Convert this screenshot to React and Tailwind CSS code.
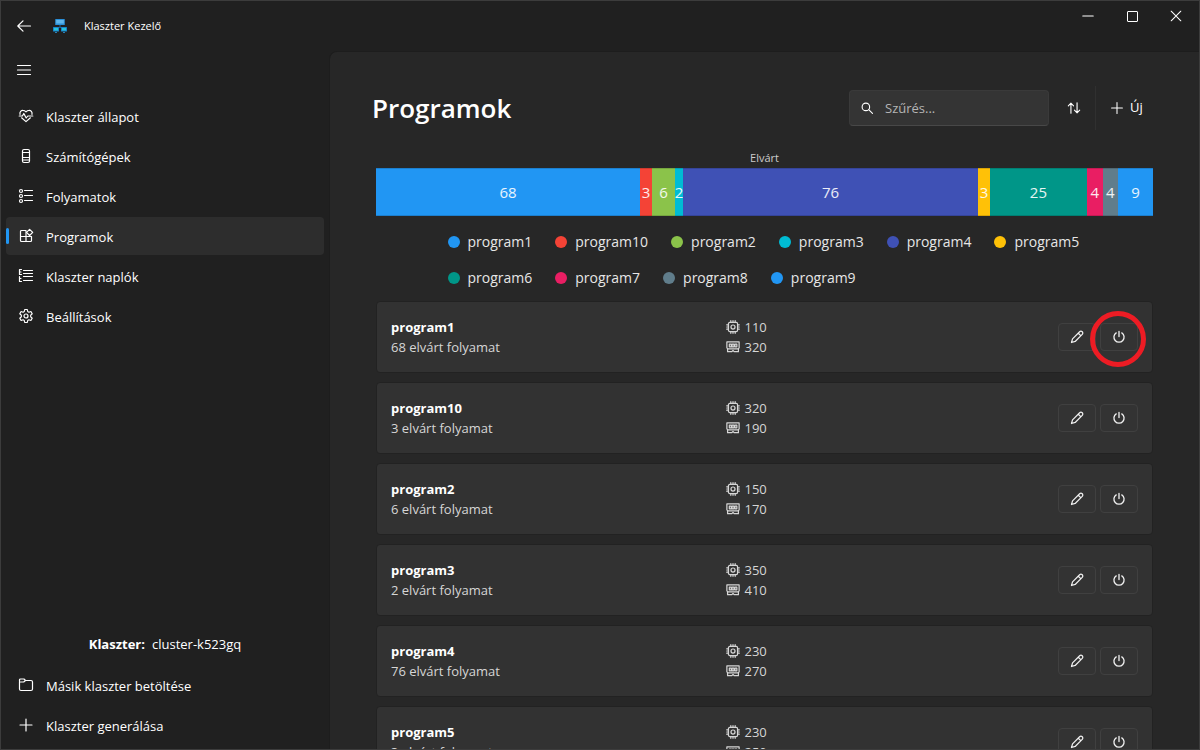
import { useState } from "react";

const programs = [
  { name: "program1", count: 68, cpu: 110, mem: 320, color: "bg-[#2196f3]" },
  { name: "program10", count: 3, cpu: 320, mem: 190, color: "bg-[#f44336]" },
  { name: "program2", count: 6, cpu: 150, mem: 170, color: "bg-[#8bc34a]" },
  { name: "program3", count: 2, cpu: 350, mem: 410, color: "bg-[#00bcd4]" },
  { name: "program4", count: 76, cpu: 230, mem: 270, color: "bg-[#3f51b5]" },
  { name: "program5", count: 3, cpu: 230, mem: 250, color: "bg-[#ffc107]" },
  { name: "program6", count: 25, color: "bg-[#009688]" },
  { name: "program7", count: 4, color: "bg-[#e91e63]" },
  { name: "program8", count: 4, color: "bg-[#607d8b]" },
  { name: "program9", count: 9, color: "bg-[#2196f3]" },
];

function Icon({ children, className = "size-4", width = 1.2 }) {
  return (
    <svg
      viewBox="0 0 16 16"
      className={`shrink-0 ${className}`}
      fill="none"
      stroke="currentColor"
      strokeWidth={width}
      strokeLinecap="round"
      strokeLinejoin="round"
      aria-hidden="true"
    >
      {children}
    </svg>
  );
}

const HeartPulse = () => (
  <Icon>
    <path d="M2 6.300C1.500 3.800 3.200 2.300 5 2.400c1.300 0 2.200.6 3 1.500.8-.9 1.700-1.500 3-1.500 1.800-.1 3.500 1.400 3 3.900M3.600 9.800 8 13.600l4.400-3.800" />
    <path d="M1.200 8h3.200l1.400-2.500 2.400 4.500L9.800 8h5" />
  </Icon>
);

const Tower = () => (
  <Icon>
    <rect x="4.500" y="1.500" width="7" height="13" rx="1.500" />
    <path d="M5 4.500h6M5 9.500h6M5 12h6" />
  </Icon>
);

const AppsList = () => (
  <Icon>
    <circle cx="3" cy="3" r="1.500" />
    <circle cx="3" cy="8" r="1.500" />
    <circle cx="3" cy="13" r="1.500" />
    <path d="M6.500 2.500H14.500M6.500 7.500H14.500M6.500 12.500H14.500" />
  </Icon>
);

const AppsAdd = () => (
  <Icon>
    <path d="M8 2.500H3.500a1 1 0 0 0-1 1v9a1 1 0 0 0 1 1h9a1 1 0 0 0 1-1V8.500H2.500M8 2.500v11" />
    <path d="m11.600 1.300 3.100 3.100-3.100 3.100-3.100-3.100z" />
  </Icon>
);

const LogList = () => (
  <Icon>
    <path d="M3.500 1.500h-2v5h2M1.500 8.500v5h2M1.500 10.500h1.500M1.500 4h1.500M5.500 2.500h9M5.500 5.500h9M5.500 8.500h9M5.500 12.500h9" />
  </Icon>
);

const Gear = () => (
  <Icon>
    <path d="M6.700 1.500h2.600l.4 2 1.200.7 2-.7 1.300 2.200-1.500 1.400v1.800l1.500 1.400-1.300 2.200-2-.7-1.200.7-.4 2H6.700l-.4-2-1.200-.7-2 .7-1.300-2.200 1.500-1.400V7.100L1.800 5.700l1.300-2.200 2 .7 1.200-.7z" />
    <circle cx="8" cy="8" r="2" />
  </Icon>
);

const Folder = () => (
  <Icon>
    <path d="M1.500 4V3a1 1 0 0 1 1-1H6l1.500 1.500h5.500a1.500 1.500 0 0 1 1.500 1.500v7a1.500 1.500 0 0 1-1.500 1.500H3A1.500 1.500 0 0 1 1.500 12V4.500M1.500 5h4.200l1.800-1.500" />
  </Icon>
);

const Plus = () => (
  <Icon>
    <path d="M8 2v12M2 8h12" />
  </Icon>
);

const Chip = () => (
  <Icon className="size-3.5" width={1.4}>
    <rect x="2.800" y="2.800" width="10.400" height="10.400" rx="1.500" />
    <circle cx="8" cy="8" r="2.300" />
    <path d="M5.500.8v2M8 .8v2M10.500.8v2M5.500 13.200v2M8 13.200v2M10.500 13.200v2M.8 5.500h2M.8 8h2M.8 10.500h2M13.200 5.500h2M13.200 8h2M13.200 10.500h2" />
  </Icon>
);

const Memory = () => (
  <Icon className="size-3.5" width={1.4}>
    <path d="M1 2.200h14v6.800l-.8.800v3.500H9.300L8 12l-1.300 1.300H1.800V9.800L1 9z" />
    <path d="M3.800 4.800h2.200v3H3.800zM6.900 4.800h2.200v3H6.900zM10.200 4.800h2.200v3h-2.200zM1.800 10.200h12.400" />
  </Icon>
);

const Pencil = () => (
  <Icon className="size-3.5" width={1.4}>
    <path d="M11 2a2 2 0 0 1 3 3L5.900 13.100l-4.200 1.200 1.200-4.200zM9.500 3.700l2.800 2.800" />
  </Icon>
);

const Power = () => (
  <Icon className="size-3.5" width={1.5}>
    <path d="M8 1.500v6M4.800 3.300a5.800 5.800 0 1 0 6.400 0" />
  </Icon>
);

const AppLogo = () => (
  <svg viewBox="0 0 16 16" className="size-4" aria-hidden="true">
    <path d="M8 7v3M4 9.500h8" stroke="#1b5e8c" strokeWidth="1.200" />
    <rect x="3.200" y="1" width="9.600" height="6" rx=".6" fill="#2a8fd8" />
    <rect x="4.200" y="2" width="7.600" height="3.500" fill="#5fb6ea" />
    <rect x="1" y="9" width="6" height="4.500" rx=".5" fill="#1683cc" />
    <rect x="9" y="9" width="6" height="4.500" rx=".5" fill="#1683cc" />
    <path d="M2 10h4v2.500H2zM10 10h4v2.500h-4z" fill="#28c4d8" />
    <path d="M3 14.500h2M11 14.500h2" stroke="#2a7fb8" />
  </svg>
);

const menu = [
  { label: "Klaszter állapot", icon: HeartPulse },
  { label: "Számítógépek", icon: Tower },
  { label: "Folyamatok", icon: AppsList },
  { label: "Programok", icon: AppsAdd },
  { label: "Klaszter naplók", icon: LogList },
  { label: "Beállítások", icon: Gear },
];

function NavItem({ label, icon: Glyph, active, onClick }) {
  return (
    <button
      type="button"
      onClick={onClick}
      aria-current={active ? "page" : undefined}
      className={`relative flex h-[38px] w-full items-center gap-3 rounded pl-3 text-left ${
        active ? "bg-[#2d2d2d]" : "hover:bg-[#292929]"
      }`}
    >
      {active && <span className="absolute top-[11px] left-0 h-4 w-[3px] rounded-full bg-[#2196f3]" />}
      <Glyph />
      <span className="pt-[3px]">{label}</span>
    </button>
  );
}

function TitleBar() {
  const control = "flex h-[30px] w-11 items-center justify-center";
  return (
    <header className="flex h-[50px] shrink-0 items-start justify-between">
      <div className="flex h-full items-center pl-[15px]">
        <button type="button" aria-label="Vissza">
          <Icon>
            <path d="M14.500 8H2M7 2.800 1.800 8 7 13.200" />
          </Icon>
        </button>
        <div className="ml-5 flex items-center gap-4">
          <AppLogo />
          <h2 className="text-[11px]">Klaszter Kezelő</h2>
        </div>
      </div>
      <div className="flex pr-px">
        <button type="button" className={control} aria-label="Kis méret">
          <Icon className="size-3.5" width={1.2}>
            <path d="M2 8h12" />
          </Icon>
        </button>
        <button type="button" className={control} aria-label="Teljes méret">
          <span className="size-[11px] rounded-[1px] border border-white" />
        </button>
        <button type="button" className={control} aria-label="Bezárás">
          <Icon className="size-3.5" width={1.2}>
            <path d="m2.500 2.500 11 11M13.500 2.500l-11 11" />
          </Icon>
        </button>
      </div>
    </header>
  );
}

function Sidebar() {
  const [active, setActive] = useState("Programok");
  return (
    <aside className="flex w-[328px] shrink-0 flex-col pr-[5px] pb-[5px] pl-[5px]">
      <button type="button" aria-label="Menü" className="flex h-[38px] w-9 items-center justify-center">
        <Icon>
          <path d="M1.500 3.500h13M1.500 8h13M1.500 12.500h13" />
        </Icon>
      </button>
      <nav className="mt-2 flex flex-col gap-0.5">
        {menu.map((m) => (
          <NavItem key={m.label} {...m} active={m.label === active} onClick={() => setActive(m.label)} />
        ))}
      </nav>
      <div className="mt-auto flex flex-col gap-0.5">
        <p className="mb-2.5 text-center leading-5">
          <strong className="mr-[7px] font-bold">Klaszter:</strong>
          cluster-k523gq
        </p>
        <NavItem label="Másik klaszter betöltése" icon={Folder} />
        <NavItem label="Klaszter generálása" icon={Plus} />
      </div>
    </aside>
  );
}

function Toolbar() {
  return (
    <div className="flex h-11 items-center pl-px">
      <h1 className="flex-1 text-[26px] font-semibold">Programok</h1>
      <label className="flex h-9 w-[200px] items-center gap-3 rounded border border-[#3a3a3a] border-b-[#484848] bg-[#343434] px-[11px]">
        <Icon className="size-3" width={1.5}>
          <circle cx="6.500" cy="6.500" r="5" />
          <path d="m10.300 10.300 5 5" />
        </Icon>
        <input
          type="text"
          aria-label="Szűrés"
          placeholder="Szűrés..."
          className="w-full min-w-0 bg-transparent pt-0.5 outline-none placeholder:text-[#b4b4b4]"
        />
      </label>
      <button type="button" aria-label="Rendezés" className="flex h-9 w-[46px] items-center justify-center pl-1">
        <Icon className="size-3.5" width={1.3}>
          <path d="M4.500 14V2.500M1.500 5.500l3-3 3 3M11.500 2v11.500M8.500 10.500l3 3 3-3" />
        </Icon>
      </button>
      <span className="h-full w-px bg-[#303030]" />
      <button type="button" className="flex h-9 w-[57px] items-center gap-1.5 pl-3.5">
        <Icon className="size-3.5" width={1.2}>
          <path d="M8 1.800v12.400M1.800 8h12.400" />
        </Icon>
        Új
      </button>
    </div>
  );
}

function Chart() {
  return (
    <figure className="mt-[19px]">
      <figcaption className="text-center text-[11px] leading-[18px] text-[#cccccc]">Elvárt</figcaption>
      <div className="mt-px flex h-12 text-[15px] text-white/90">
        {programs.map((p) => (
          <div
            key={p.name}
            style={{ flexGrow: p.count }}
            className={`flex min-w-0 basis-0 items-center justify-center border-y border-black/15 ${p.color}`}
          >
            {p.count}
          </div>
        ))}
      </div>
      <ul className="mx-auto mt-2 flex max-w-[634px] flex-wrap gap-x-[23px] text-[14px] leading-9 text-[#e6e6e6]">
        {programs.map((p) => (
          <li key={p.name} className="flex items-center gap-2">
            <span className={`size-3 rounded-full ${p.color}`} />
            {p.name}
          </li>
        ))}
      </ul>
    </figure>
  );
}

function ProgramCard({ program, marked }) {
  const button = "flex h-7 w-[38px] items-center justify-center rounded border border-[#404040] bg-[#333333]";
  return (
    <li className="grid grid-cols-[1fr_1fr_auto] items-center rounded border border-[#222222] bg-[#323232] px-3.5 py-[15px] leading-5 text-[#d6d6d6]">
      <div>
        <h3 className="font-bold text-white">{program.name}</h3>
        <p>{program.count} elvárt folyamat</p>
      </div>
      <div className="pl-px">
        <p className="flex items-center gap-[5px]">
          <Chip />
          {program.cpu}
        </p>
        <p className="flex items-center gap-[5px]">
          <Memory />
          {program.mem}
        </p>
      </div>
      <div className="flex gap-1 text-[#f0f0f0]">
        <button type="button" className={button} aria-label={`${program.name} szerkesztése`}>
          <Pencil />
        </button>
        <div className="relative">
          <button type="button" className={button} aria-label={`${program.name} leállítása`}>
            <Power />
          </button>
          {marked && (
            <span className="pointer-events-none absolute -top-3 -left-2.5 size-14 rounded-full border-[5px] border-[#ed1c24]" />
          )}
        </div>
      </div>
    </li>
  );
}

export default function App() {
  return (
    <div className="flex h-screen flex-col overflow-hidden border border-[#3c3c3c] bg-[#202020] font-['Open_Sans','Noto_Sans',sans-serif] text-[13px] text-white">
      <TitleBar />
      <div className="flex min-h-0 flex-1">
        <Sidebar />
        <main className="min-w-0 flex-1 overflow-hidden rounded-tl-lg border-t border-l border-[#1d1d1d] bg-[#272727] pt-[34px] pr-[46px] pl-[41px]">
          <Toolbar />
          <div className="pl-[5px]">
            <Chart />
            <ul className="mt-[5px] flex flex-col gap-[9px]">
              {programs.slice(0, 6).map((p, i) => (
                <ProgramCard key={p.name} program={p} marked={i === 0} />
              ))}
            </ul>
          </div>
        </main>
      </div>
    </div>
  );
}
